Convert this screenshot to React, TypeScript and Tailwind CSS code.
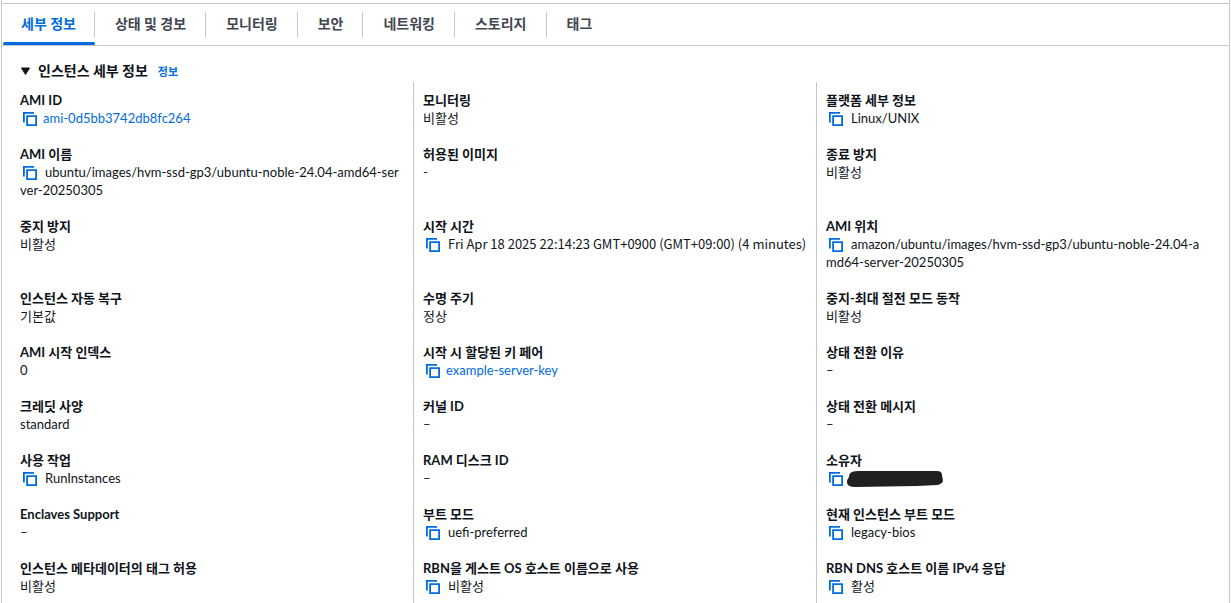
import { useState } from "react";
import clsx from "clsx";

interface Detail {
  label: string;
  value: string;
  kind?: "copy" | "link" | "time" | "hidden";
}

const tabs = ["세부 정보", "상태 및 경보", "모니터링", "보안", "네트워킹", "스토리지", "태그"];

// three entries per row
const details: Detail[] = [
  { label: "AMI ID", value: "ami-0d5bb3742db8fc264", kind: "link" },
  { label: "모니터링", value: "비활성" },
  { label: "플랫폼 세부 정보", value: "Linux/UNIX", kind: "copy" },
  { label: "AMI 이름", value: "ubuntu/images/hvm-ssd-gp3/ubuntu-noble-24.04-amd64-server-20250305", kind: "copy" },
  { label: "허용된 이미지", value: "-" },
  { label: "종료 방지", value: "비활성" },
  { label: "중지 방지", value: "비활성" },
  { label: "시작 시간", value: "Fri Apr 18 2025 22:14:23 GMT+0900 (GMT+09:00) (4 minutes)", kind: "time" },
  { label: "AMI 위치", value: "amazon/ubuntu/images/hvm-ssd-gp3/ubuntu-noble-24.04-amd64-server-20250305", kind: "copy" },
  { label: "인스턴스 자동 복구", value: "기본값" },
  { label: "수명 주기", value: "정상" },
  { label: "중지-최대 절전 모드 동작", value: "비활성" },
  { label: "AMI 시작 인덱스", value: "0" },
  { label: "시작 시 할당된 키 페어", value: "example-server-key", kind: "link" },
  { label: "상태 전환 이유", value: "–" },
  { label: "크레딧 사양", value: "standard" },
  { label: "커널 ID", value: "–" },
  { label: "상태 전환 메시지", value: "–" },
  { label: "사용 작업", value: "RunInstances", kind: "copy" },
  { label: "RAM 디스크 ID", value: "–" },
  { label: "소유자", value: "", kind: "hidden" },
  { label: "Enclaves Support", value: "–" },
  { label: "부트 모드", value: "uefi-preferred", kind: "copy" },
  { label: "현재 인스턴스 부트 모드", value: "legacy-bios", kind: "copy" },
  { label: "인스턴스 메타데이터의 태그 허용", value: "비활성" },
  { label: "RBN을 게스트 OS 호스트 이름으로 사용", value: "비활성", kind: "copy" },
  { label: "RBN DNS 호스트 이름 IPv4 응답", value: "활성", kind: "copy" },
];

function CopyButton({ label }: { label: string }) {
  return (
    <button type="button" aria-label={`${label} 복사`} className="ml-[3px] inline-block h-[14px] w-[14px] align-[-3px] text-[#006ce0]">
      <svg viewBox="0 0 14 14" className="block h-full w-full" fill="none" stroke="currentColor" strokeWidth="1.8">
        <path d="M0.9 10.5V0.9h10.1" />
        <path d="M4.1 4.1h9v9h-9z" />
      </svg>
    </button>
  );
}

function DetailValue({ item }: { item: Detail }) {
  if (!item.kind) return <>{item.value}</>;

  return (
    <>
      <CopyButton label={item.label} />
      {item.kind === "link" && (
        <a href="#" className="ml-[6px] text-[#006ce0]">
          {item.value}
        </a>
      )}
      {item.kind === "copy" && <span className="ml-2">{item.value}</span>}
      {item.kind === "time" && <time className="ml-2 font-['Noto_Sans_CJK_KR',sans-serif]">{item.value}</time>}
      {item.kind === "hidden" && (
        <svg viewBox="0 0 96 18" className="ml-1 inline-block h-[18px] w-24 align-top" fill="#202020" aria-hidden="true">
          <path d="M5 3Q7 2 12 2L90 2Q95 2 95 6L96 12Q95 15 90 16L70 17L8 18Q1 18 0 14Q0 10 2 8Q2 4 5 3Z" />
        </svg>
      )}
    </>
  );
}

export default function App() {
  const [activeTab, setActiveTab] = useState(0);
  const [open, setOpen] = useState(true);

  return (
    <div className="h-screen overflow-hidden bg-white font-['Lato','Noto_Sans_CJK_KR',sans-serif] text-[13px] leading-[18px] text-[#0f141a]">
      <div className="mx-px min-h-full border-x border-[#c6c6cd] pt-[3px]">
        {/* Tabs */}
        <div role="tablist" className="flex h-[43px] border-y border-[#c6c6cd] pl-px">
          {tabs.map((tab, i) => (
            <button
              key={tab}
              type="button"
              role="tab"
              aria-selected={activeTab === i}
              onClick={() => setActiveTab(i)}
              className={clsx(
                "flex flex-col text-sm leading-[24px] font-bold",
                activeTab === i ? "text-[#006ce0]" : "text-[#424650]",
              )}
            >
              <span
                className={clsx(
                  "mt-2 mb-[5px] flex h-[25px] items-start",
                  i === 0 ? "px-[18px]" : "pr-[19px] pl-5",
                  i < tabs.length - 1 && "border-r border-[#c6c6cd]",
                )}
              >
                {tab}
              </span>
              <span className={clsx("h-[3px] w-full rounded-sm", activeTab === i && "bg-[#006ce0]")} />
            </button>
          ))}
        </div>

        {/* Section header */}
        <div className="flex items-center pt-[15px] pl-[18px]">
          <button type="button" aria-expanded={open} onClick={() => setOpen(!open)} className="flex items-center text-sm leading-[20px] font-bold">
            <svg viewBox="0 0 10 8" className={clsx("mr-2 h-2 w-[10px]", !open && "-rotate-90")} fill="currentColor">
              <path d="M1.5 1h8L5.5 7.5z" stroke="currentColor" strokeLinejoin="round" />
            </svg>
            인스턴스 세부 정보
          </button>
          <a href="#" className="ml-[10px] pt-px text-[11px] font-bold text-[#006ce0]">
            정보
          </a>
        </div>

        {/* Details */}
        {open && (
          <dl className="mr-[10px] ml-2 mt-px grid grid-cols-3">
            {details.map((item, i) => (
              <div
                key={item.label}
                className={clsx(
                  "border-l py-[9px] pl-[9px]",
                  i % 3 === 0 ? "border-transparent" : "border-[#c6c6cd]",
                  i % 3 === 2 ? "pr-3" : "pr-2",
                )}
              >
                <dt className="font-bold">{item.label}</dt>
                <dd className="break-all">
                  <DetailValue item={item} />
                </dd>
              </div>
            ))}
          </dl>
        )}
      </div>
    </div>
  );
}
